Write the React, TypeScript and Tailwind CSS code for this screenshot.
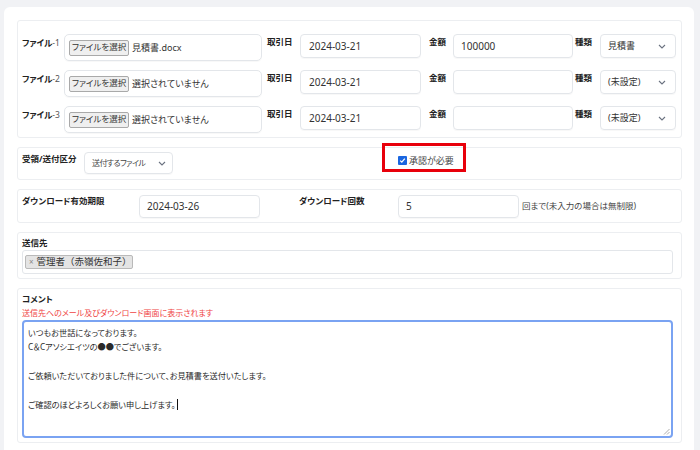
import React from "react";

const FONT = '"Noto Sans", "Noto Sans CJK JP", sans-serif';

function Chevron({ className = "" }: { className?: string }) {
  return (
    <svg width="8" height="5" viewBox="0 0 8 5" className={className}>
      <path d="M1 1 L4 4 L7 1" fill="none" stroke="#6b7280" strokeWidth="1.1" />
    </svg>
  );
}

function FileRow({ n, file, amount, kind }: { n: number; file: string; amount: string; kind: string }) {
  return (
    <div className="flex items-start">
      <div className="w-[42px] whitespace-nowrap pt-[3px] text-[8.5px] leading-[12px] text-[#222]">
        <span className="font-bold">ファイル</span>
        <span className="text-[#555]">-{n}</span>
      </div>
      <div className="flex h-[27px] w-[198px] items-center rounded-[5px] border border-[#e3e6ea] pl-[4px] shadow-[0_1px_1px_rgba(0,0,0,0.03)]">
        <div className="flex h-[16px] w-[60px] items-center justify-center whitespace-nowrap rounded-[2px] border border-[#a9a9a9] bg-[#efefef] text-[8.5px] text-[#333]">
          ファイルを選択
        </div>
        <span className="ml-[3px] whitespace-nowrap text-[9px] text-[#333]">{file}</span>
      </div>
      <div className="ml-[5px] w-[33px] pt-[2px] text-[8.5px] font-bold leading-[12px] text-[#222]">取引日</div>
      <div className="flex h-[24px] w-[121px] items-center rounded-[4px] border border-[#e3e6ea] pl-[8px] text-[10px] text-[#333] shadow-[0_1px_1px_rgba(0,0,0,0.03)]">
        2024-03-21
      </div>
      <div className="ml-[8px] w-[24px] pt-[2px] text-[8.5px] font-bold leading-[12px] text-[#222]">金額</div>
      <div className="flex h-[24px] w-[120px] items-center rounded-[4px] border border-[#e3e6ea] pl-[7px] text-[10px] text-[#333] shadow-[0_1px_1px_rgba(0,0,0,0.03)]">
        {amount}
      </div>
      <div className="ml-[2px] w-[25px] pt-[2px] text-[8.5px] font-bold leading-[12px] text-[#222]">種類</div>
      <div className="flex h-[24px] w-[76px] items-center justify-between rounded-[4px] border border-[#e3e6ea] pl-[7px] pr-[9px] text-[9px] text-[#333] shadow-[0_1px_1px_rgba(0,0,0,0.03)]">
        <span className="whitespace-nowrap">{kind}</span>
        <Chevron />
      </div>
    </div>
  );
}

export default function App() {
  return (
    <div
      className="h-[450px] overflow-hidden bg-[#f1f2f5] pl-[4px] pr-[6px] pt-[7px] [font-feature-settings:'palt']"
      style={{ fontFamily: FONT }}
    >
      <div className="flex flex-col gap-[9px] rounded-[6px] bg-white pb-[20px] pl-[13px] pr-[12px] pt-[13px]">
        {/* Section 1 */}
        <div className="flex h-[118px] flex-col gap-[9px] rounded-[3px] border border-[#eceef1] pl-[4px] pt-[13px]">
          <FileRow n={1} file="見積書.docx" amount="100000" kind="見積書" />
          <FileRow n={2} file="選択されていません" amount="" kind="(未設定)" />
          <FileRow n={3} file="選択されていません" amount="" kind="(未設定)" />
        </div>

        {/* Section 2 */}
        <div className="relative flex h-[33px] items-start rounded-[3px] border border-[#eceef1] pl-[4px] pt-[4px]">
          <div className="w-[62px] whitespace-nowrap pt-[1px] text-[8.5px] font-bold leading-[12px] text-[#222]">受領/送付区分</div>
          <div className="flex h-[22px] w-[89px] items-center rounded-[4px] border border-[#e3e6ea] pl-[7px] text-[8px] text-[#444] shadow-[0_1px_1px_rgba(0,0,0,0.03)]">
            <span className="whitespace-nowrap tracking-[-0.6px]">送付するファイル</span>
            <Chevron className="ml-[13px]" />
          </div>
          <div className="ml-[225px] flex items-center pt-[2px]">
            <span className="flex h-[9px] w-[9px] items-center justify-center rounded-[1px] bg-[#1a66e0]">
              <svg width="7" height="7" viewBox="0 0 7 7">
                <path d="M1.2 3.6 L2.8 5.1 L5.8 1.6" fill="none" stroke="#fff" strokeWidth="1.3" />
              </svg>
            </span>
            <span className="ml-[2px] whitespace-nowrap text-[9px] text-[#444]">承認が必要</span>
          </div>
          <div className="absolute left-[364px] top-[-5px] h-[29px] w-[84px] border-[3px] border-[#e8000b]" />
        </div>

        {/* Section 3 */}
        <div className="flex h-[34px] items-start rounded-[3px] border border-[#eceef1] pl-[4px] pt-[5px]">
          <div className="w-[117px] whitespace-nowrap text-[8.5px] font-bold leading-[12px] text-[#222]">ダウンロード有効期限</div>
          <div className="flex h-[23px] w-[121px] items-center rounded-[4px] border border-[#e3e6ea] pl-[7px] text-[10px] text-[#333] shadow-[0_1px_1px_rgba(0,0,0,0.03)]">
            2024-03-26
          </div>
          <div className="ml-[39px] w-[99px] whitespace-nowrap text-[8.5px] font-bold leading-[12px] text-[#222]">ダウンロード回数</div>
          <div className="flex h-[23px] w-[121px] items-center rounded-[4px] border border-[#e3e6ea] pl-[7px] text-[10px] text-[#333] shadow-[0_1px_1px_rgba(0,0,0,0.03)]">
            5
          </div>
          <div className="ml-[3px] flex h-[23px] items-center whitespace-nowrap text-[8.5px] text-[#444]">回まで(未入力の場合は無制限)</div>
        </div>

        {/* Section 4 */}
        <div className="flex h-[47px] flex-col rounded-[3px] border border-[#eceef1] pl-[4px] pr-[8px] pt-[4px]">
          <div className="text-[8.5px] font-bold leading-[12px] text-[#222]">送信先</div>
          <div className="mt-[1px] flex h-[24px] items-center rounded-[3px] border border-[#e3e6ea] pl-[2px]">
            <div className="flex h-[14px] w-[108px] items-center rounded-[2px] border border-[#b9b9b9] bg-[#e4e4e4] pl-[3px] text-[9.5px] text-[#333] [font-feature-settings:normal]">
              <span className="text-[8px] text-[#888]">×</span>
              <span className="ml-[3px] whitespace-nowrap">管理者（赤嶺佐和子）</span>
            </div>
          </div>
        </div>

        {/* Section 5 */}
        <div className="flex h-[155px] flex-col rounded-[3px] border border-[#eceef1] pl-[4px] pr-[8px] pt-[4px]">
          <div className="text-[8.5px] font-bold leading-[12px] text-[#222]">コメント</div>
          <div className="mt-[2px] whitespace-nowrap text-[8px] leading-[12px] text-[#ef4444]">送信先へのメール及びダウンロード画面に表示されます</div>
          <div className="relative mt-[1px] h-[118px] rounded-[4px] border-[2px] border-[#7aa3f2] pl-[4px] pt-[4px] text-[8.2px] leading-[14.2px] text-[#2a2a2a]">
            <div>いつもお世話になっております。</div>
            <div>C＆Cアソシエイツの●●でございます。</div>
            <div>&nbsp;</div>
            <div>ご依頼いただいておりました件について、お見積書を送付いたします。</div>
            <div>&nbsp;</div>
            <div>
              ご確認のほどよろしくお願い申し上げます。
              <span className="ml-[1px] inline-block h-[11px] w-[1px] translate-y-[2px] bg-[#111]" />
            </div>
            <svg width="7" height="7" viewBox="0 0 7 7" className="absolute bottom-[1px] right-[1px]">
              <path d="M6.5 1 L1 6.5 M6.5 4 L4 6.5" stroke="#999" strokeWidth="0.8" />
            </svg>
          </div>
        </div>
      </div>
    </div>
  );
}
